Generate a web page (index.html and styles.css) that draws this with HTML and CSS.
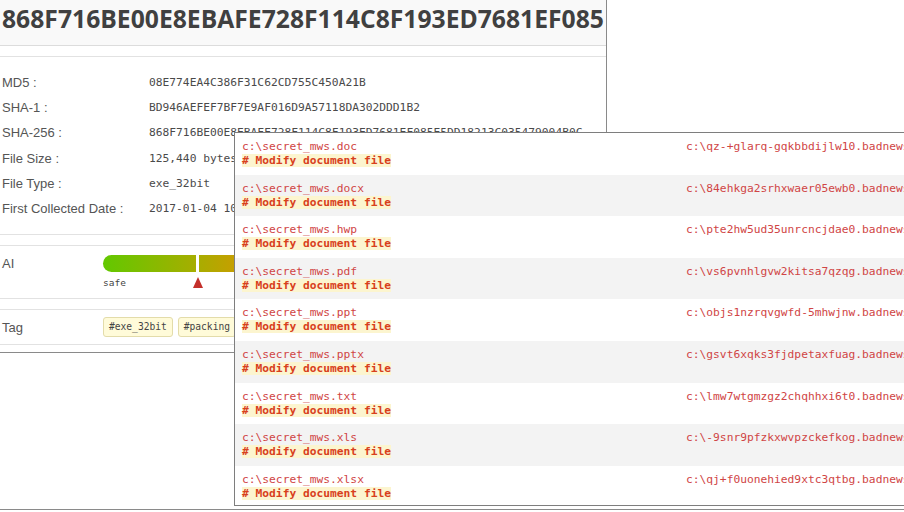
FILE: index.html
```html
<!DOCTYPE html>
<html lang="en">
<head>
    <meta charset="UTF-8">
    <meta name="viewport" content="width=device-width, initial-scale=1.0">
    <title>Sample Detail</title>
    <link rel="stylesheet" href="styles.css">
</head>
<body>

    <div class="page">
        <div class="detail">
            <h1 class="title">868F716BE00E8EBAFE728F114C8F193ED7681EF085</h1>

            <!-- Hash / file info -->
            <div class="section info">
                <div class="info-row"><span class="label">MD5 :</span><span class="value">08E774EA4C386F31C62CD755C450A21B</span></div>
                <div class="info-row"><span class="label">SHA-1 :</span><span class="value">BD946AEFEF7BF7E9AF016D9A57118DA302DDD1B2</span></div>
                <div class="info-row"><span class="label">SHA-256 :</span><span class="value">868F716BE00E8EBAFE728F114C8F193ED7681EF085E5DD18213C035479004B0C</span></div>
                <div class="info-row"><span class="label">File Size :</span><span class="value">125,440 bytes</span></div>
                <div class="info-row"><span class="label">File Type :</span><span class="value">exe_32bit</span></div>
                <div class="info-row"><span class="label">First Collected Date :</span><span class="value">2017-01-04 10:21:37</span></div>
            </div>

            <!-- AI score -->
            <div class="section ai">
                <span class="label">AI</span>
                <div class="score">
                    <div class="score-bar">
                        <span class="score-split"></span>
                    </div>
                    <div class="score-legend">
                        <span class="safe">safe</span>
                        <span class="marker"></span>
                    </div>
                </div>
            </div>

            <!-- Tags -->
            <div class="section tags">
                <span class="label">Tag</span>
                <div class="tag-list">
                    <span class="tag">#exe_32bit</span>
                    <span class="tag">#packing</span>
                    <span class="tag">#ransomware</span>
                </div>
            </div>
        </div>

        <!-- Behavior popup -->
        <div class="popup">
            <div class="popup-row">
                <div class="cell"><div class="path">c:\secret_mws.doc</div><div class="desc"><span># Modify document file</span></div></div>
                <div class="cell"><div class="path">c:\qz-+glarq-gqkbbdijlw10.badnews</div></div>
            </div>
            <div class="popup-row">
                <div class="cell"><div class="path">c:\secret_mws.docx</div><div class="desc"><span># Modify document file</span></div></div>
                <div class="cell"><div class="path">c:\84ehkga2srhxwaer05ewb0.badnews</div></div>
            </div>
            <div class="popup-row">
                <div class="cell"><div class="path">c:\secret_mws.hwp</div><div class="desc"><span># Modify document file</span></div></div>
                <div class="cell"><div class="path">c:\pte2hw5ud35unrcncjdae0.badnews</div></div>
            </div>
            <div class="popup-row">
                <div class="cell"><div class="path">c:\secret_mws.pdf</div><div class="desc"><span># Modify document file</span></div></div>
                <div class="cell"><div class="path">c:\vs6pvnhlgvw2kitsa7qzqg.badnews</div></div>
            </div>
            <div class="popup-row">
                <div class="cell"><div class="path">c:\secret_mws.ppt</div><div class="desc"><span># Modify document file</span></div></div>
                <div class="cell"><div class="path">c:\objs1nzrqvgwfd-5mhwjnw.badnews</div></div>
            </div>
            <div class="popup-row">
                <div class="cell"><div class="path">c:\secret_mws.pptx</div><div class="desc"><span># Modify document file</span></div></div>
                <div class="cell"><div class="path">c:\gsvt6xqks3fjdpetaxfuag.badnews</div></div>
            </div>
            <div class="popup-row">
                <div class="cell"><div class="path">c:\secret_mws.txt</div><div class="desc"><span># Modify document file</span></div></div>
                <div class="cell"><div class="path">c:\lmw7wtgmzgz2chqhhxi6t0.badnews</div></div>
            </div>
            <div class="popup-row">
                <div class="cell"><div class="path">c:\secret_mws.xls</div><div class="desc"><span># Modify document file</span></div></div>
                <div class="cell"><div class="path">c:\-9snr9pfzkxwvpzckefkog.badnews</div></div>
            </div>
            <div class="popup-row">
                <div class="cell"><div class="path">c:\secret_mws.xlsx</div><div class="desc"><span># Modify document file</span></div></div>
                <div class="cell"><div class="path">c:\qj+f0uonehied9xtc3qtbg.badnews</div></div>
            </div>
        </div>
    </div>

</body>
</html>
```

FILE: styles.css
```css
body {
    margin: 0;
    background-color: #fff;
    font-family: "Liberation Sans", Arial, sans-serif;
    overflow: hidden;
}

.page {
    position: relative;
    height: 509px;
    border-bottom: 1px solid #8a8a8a;
    overflow: hidden;
}

.detail {
    width: 606px;
    border-right: 1px solid #8a8a8a;
    border-bottom: 1px solid #8a8a8a;
    padding-bottom: 7px;
}

.title {
    margin: 0;
    height: 45px;
    padding-left: 2px;
    background-color: #f9f9f9;
    border-bottom: 1px solid #dcdcdc;
    font-family: "Open Sans", sans-serif;
    font-size: 24.7px;
    font-weight: bold;
    line-height: 38px;
    color: #404040;
    white-space: nowrap;
}

.section {
    margin-top: 10px;
    border-top: 1px solid #e2e2e2;
    border-bottom: 1px solid #e2e2e2;
}

.label {
    font-size: 13px;
    color: #555;
    padding-left: 2px;
}

.value {
    font-family: "DejaVu Sans Mono", monospace;
    font-size: 11.25px;
    color: #4a4a4a;
}

/* Hash / file info */
.info {
    padding: 13px 0 13px;
}

.info-row {
    display: grid;
    grid-template-columns: 149px auto;
    height: 25.2px;
    align-items: center;
    white-space: nowrap;
}

/* AI score */
.ai {
    display: grid;
    grid-template-columns: 103px auto;
    height: 52px;
}

.ai .label {
    padding-top: 10px;
}

.score {
    padding-top: 9px;
}

.score-bar {
    position: relative;
    width: 480px;
    height: 17px;
    border-radius: 9px 0 0 9px;
    background: linear-gradient(to right, #62c800 0, #a8ad00 95px, #c89e00 135px, #e07400 300px, #d23a1c 480px);
}

.score-split {
    position: absolute;
    left: 93px;
    top: 0;
    width: 3px;
    height: 17px;
    background-color: #fff;
}

.score-legend {
    position: relative;
    height: 18px;
}

.safe {
    font-family: "DejaVu Sans Mono", monospace;
    font-size: 9.5px;
    color: #444;
    line-height: 22px;
}

.marker {
    position: absolute;
    left: 90px;
    top: 5px;
    width: 0;
    height: 0;
    border-left: 5px solid transparent;
    border-right: 5px solid transparent;
    border-bottom: 11px solid #c4302b;
}

/* Tags */
.tags {
    display: grid;
    grid-template-columns: 103px auto;
    align-items: center;
    height: 34px;
}

.tag-list {
    display: flex;
    gap: 5px;
    white-space: nowrap;
}

.tag {
    font-family: "DejaVu Sans Mono", monospace;
    font-size: 9.6px;
    color: #444;
    padding: 0 5px;
    height: 18px;
    line-height: 18px;
    background-color: #fffbd9;
    border: 1px solid #e3dcaa;
    border-radius: 3px;
}

/* Behavior popup */
.popup {
    position: absolute;
    left: 234px;
    top: 132px;
    width: 760px;
    background-color: #fff;
    border: 1px solid #7e7e7e;
}

.popup-row {
    display: grid;
    grid-template-columns: 444px auto;
    height: 41.6px;
    box-sizing: border-box;
    padding: 7px 7px 0;
    font-family: "DejaVu Sans Mono", monospace;
    font-size: 11.25px;
    line-height: 14px;
    white-space: nowrap;
}

.popup-row:nth-child(even) {
    background-color: #f3f3f3;
}

.popup-row:last-child {
    height: 39px;
}

.path {
    color: #d04545;
}

.desc span {
    font-weight: bold;
    color: #d8401c;
    background-color: #fcf5cf;
}
```
